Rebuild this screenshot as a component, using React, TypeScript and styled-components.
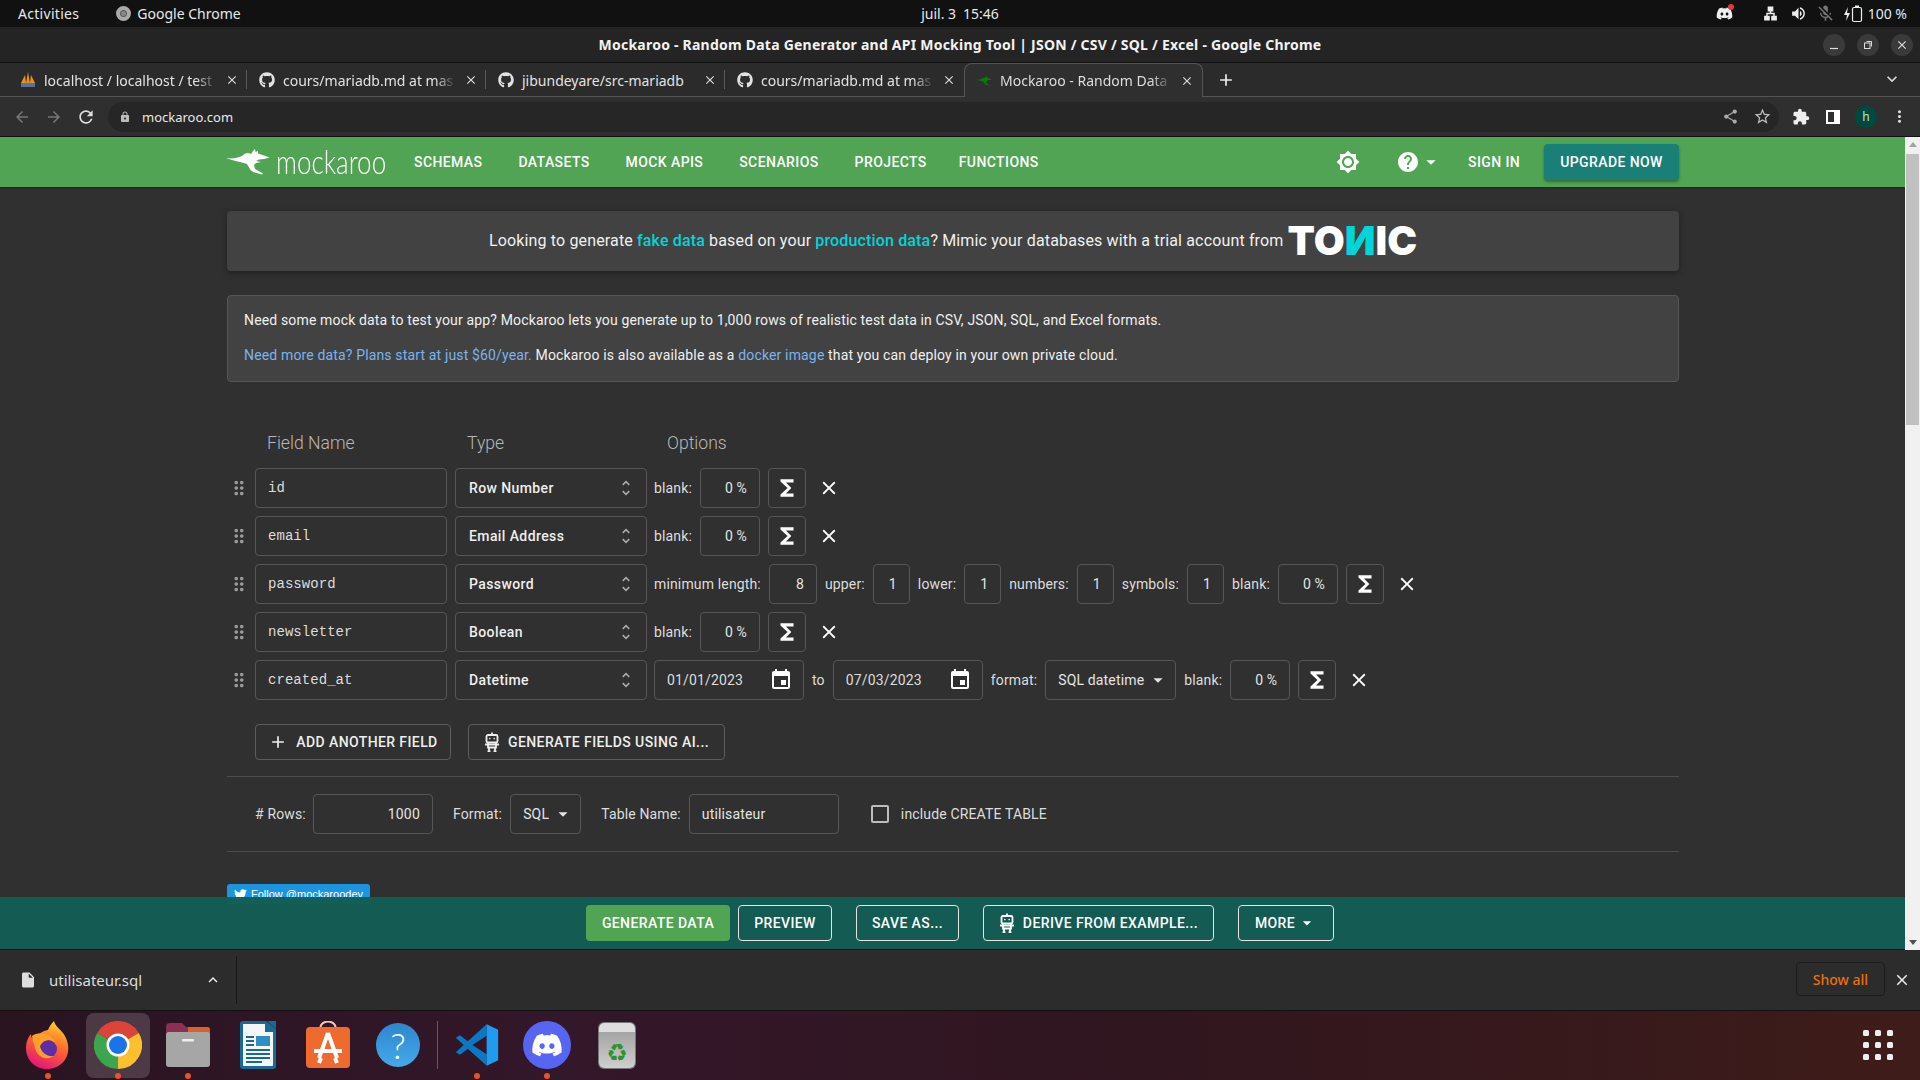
import React from "react";
import styled, { createGlobalStyle } from "styled-components";
import { FaGithub, FaDiscord, FaTwitter } from "react-icons/fa";
import {
  MdBrightness7, MdHelp, MdEvent, MdClose, MdDragIndicator, MdFunctions, MdUnfoldMore,
  MdArrowDropDown, MdAdd, MdArrowBack, MdArrowForward, MdRefresh, MdLock, MdStarBorder, MdShare,
  MdExtension, MdMoreVert, MdKeyboardArrowDown, MdKeyboardArrowUp, MdInsertDriveFile,
  MdVolumeUp, MdMicOff, MdLan,
} from "react-icons/md";

const Global = createGlobalStyle`
  html, body { margin: 0; padding: 0; width: 1920px; height: 1080px; overflow: hidden; background: #303030; }
  #root { width: 1920px; height: 1080px; }
  * { box-sizing: border-box; }
`;

const ubuntu = `"Noto Sans", "Open Sans", sans-serif`;

const Screen = styled.div`
  width: 1920px; height: 1080px; display: flex; flex-direction: column;
  font-family: Roboto, sans-serif; font-size: 14px; color: #eee; overflow: hidden;
`;

/* GNOME top bar */
const TopBar = styled.div`
  height: 27px; flex: none; background: #111; display: grid; grid-template-columns: 1fr auto 1fr;
  align-items: center; padding: 0 13px; font-family: ${ubuntu}; font-size: 14px; color: #e8e8e8;
`;
const TopLeft = styled.div`display: flex; align-items: center; padding-left: 5px;`;
const Activities = styled.span`margin-right: 37px; letter-spacing: 0.3px;`;
const AppName = styled.span`display: flex; align-items: center; gap: 6px;`;
const AppDot = styled.span`
  width: 15px; height: 15px; border-radius: 50%; background: #888; border: 4px solid #aaa;
  box-shadow: inset 0 0 0 1px #555;
`;
const Clock = styled.div`display: flex; gap: 7px; font-size: 14px;`;
const Tray = styled.div`display: flex; align-items: center; justify-content: flex-end; color: #eee;`;
const TrayIcon = styled.span<{ $ml: number; $dim?: boolean }>`
  display: inline-flex; margin-left: ${p => p.$ml}px; color: ${p => (p.$dim ? "#777" : "#eee")};
  position: relative;
`;
const RedDot = styled.span`
  position: absolute; right: -1px; top: -1px; width: 6px; height: 6px; border-radius: 50%; background: #e33;
`;
const Percent = styled.span`margin-left: 5px; font-size: 14px; color: #dfe9f5;`;

/* title bar */
const TitleBar = styled.div`
  height: 36px; flex: none; background: #242424; border-bottom: 1px solid #111;
  position: relative; display: flex; align-items: center; justify-content: center;
  font-family: ${ubuntu}; font-weight: 700; font-size: 14px; color: #f2f2f2;
`;
const TitleText = styled.span`letter-spacing: 0.23px;`;
const WinButtons = styled.div`
  position: absolute; right: 7px; top: 7px; display: flex; gap: 12px;
`;
const WinButton = styled.span`
  width: 22px; height: 22px; border-radius: 50%; background: #3a3a3a; display: flex;
  align-items: center; justify-content: center; color: #ddd;
`;

/* tabs */
const TabStrip = styled.div`
  height: 34px; flex: none; background: #2b2b2b; display: flex; align-items: stretch;
  padding-left: 8px; border-bottom: 1px solid #555; position: relative;
`;
const Tab = styled.div<{ $active?: boolean; $sep?: boolean }>`
  width: 239px; display: flex; align-items: center; gap: 8px; padding: 0 8px 0 12px;
  font-family: ${ubuntu}; font-size: 14px; color: ${p => (p.$active ? "#ddd" : "#e2e2e2")};
  position: relative; margin-bottom: -1px;
  ${p => p.$active && `
    background: #2f2f2f; border: 1px solid #555; border-bottom: none; border-radius: 8px 8px 0 0; padding-left: 11px;
  `}
  ${p => p.$sep && `
    &::after { content: ""; position: absolute; right: 0; top: 7px; bottom: 8px; width: 1px; background: #5a5a5a; }
  `}
`;
const TabIcon = styled.span`flex: none; width: 16px; height: 16px; display: flex; align-items: center; justify-content: center;`;
const TabLabel = styled.span<{ $fade?: boolean }>`
  flex: 1; white-space: nowrap;
  ${p => p.$fade && `
    -webkit-mask-image: linear-gradient(to right, #000 88%, transparent 100%);
    mask-image: linear-gradient(to right, #000 88%, transparent 100%);
  `}
`;
const TabClose = styled.span`flex: none; display: flex; color: #ddd;`;
const TabAdd = styled.span`display: flex; align-items: center; margin-left: 13px; color: #eee;`;
const TabChevron = styled.span`position: absolute; right: 18px; top: 6px; display: flex; color: #ddd;`;

/* toolbar */
const Toolbar = styled.div`
  height: 40px; flex: none; background: #2f2f2f; border-bottom: 1px solid #111; display: flex; align-items: center;
  padding-left: 6px;
`;
const NavIcon = styled.span<{ $dim?: boolean; $w?: number }>`
  width: ${p => p.$w ?? 32}px; display: flex; justify-content: center; align-items: center; flex: none;
  color: ${p => (p.$dim ? "#777" : "#ddd")};
`;
const Omnibox = styled.div`
  margin-left: 6px; width: 1671px; height: 30px; border-radius: 15px; background: #262626; display: flex;
  align-items: center; padding: 0 1px 0 11px; font-family: ${ubuntu}; font-size: 13px; color: #e8e8e8; gap: 7px; flex: none;
`;
const Url = styled.span`flex: 1; margin-left: 4px;`;
const Avatar = styled.span`
  width: 22px; height: 22px; border-radius: 50%; background: #00493f; color: #bfe5dc; display: flex;
  align-items: center; justify-content: center; font-size: 12px; font-family: ${ubuntu};
  margin: 0 6px 0 12px; flex: none;
`;
const SidePanel = styled.span`
  width: 14px; height: 14px; background: linear-gradient(to right, #2f2f2f 0 60%, #fff 60%);
  border: 2px solid #fff; display: block;
`;

/* page */
const Viewport = styled.div`flex: 1; display: flex; min-height: 0; background: #303030;`;
const Page = styled.div`flex: 1; position: relative; overflow: hidden; display: flex; flex-direction: column; letter-spacing: 0.15px;`;

const Nav = styled.nav`
  height: 50px; flex: none; background: #50a454; display: flex; align-items: center; padding: 0 0 0 226px;
  box-shadow: 0 1px 2px rgba(0,0,0,.3);
`;
const Logo = styled.div`
  width: 161px; display: flex; align-items: center; flex: none; gap: 6px; margin-right: 27px;
  svg { flex: none; }
`;
const LogoText = styled.span`
  font-family: Lato, sans-serif; font-weight: 300; font-size: 32.5px; color: #fff; line-height: 40px; width: 110px;
  transform-origin: left center; transform: scaleX(0.8); white-space: nowrap; letter-spacing: 0;
`;
const NavLinks = styled.div`display: flex; gap: 36px; flex: none;`;
const NavLink = styled.a`
  font-weight: 500; font-size: 14px; letter-spacing: 0.4px; color: #fff; text-transform: uppercase; white-space: nowrap;
  &:last-child { margin-left: -4px; }
`;
const NavRight = styled.div`
  margin-left: auto; width: 343px; margin-right: 226px; flex: none; display: flex; align-items: center; color: #fff;
`;
const HelpGroup = styled.span`display: flex; align-items: center; margin-left: 36px;`;
const SignIn = styled(NavLink)`margin-left: 26px;`;
const Upgrade = styled.button`
  margin-left: auto; height: 36px; width: 135px; border: 0; border-radius: 4px; background: #1a8077; color: #fff;
  font: 500 14px Roboto, sans-serif; letter-spacing: 0.4px; box-shadow: 0 2px 3px rgba(0,0,0,.35); text-transform: uppercase;
`;

const Content = styled.main`
  flex: 1; padding: 24px 226px 0 227px; min-height: 0;
`;
const Banner = styled.div`
  height: 60px; padding-bottom: 2px; background: #424242; border-radius: 4px; display: flex; align-items: center; justify-content: center;
  font-size: 16px; color: #f0f0f0; box-shadow: 0 2px 6px rgba(0,0,0,.35); white-space: pre;
`;
const Accent = styled.b`color: #00d5d8; font-weight: 500;`;
const Tonic = styled.span`
  font-family: Inter, sans-serif; font-weight: 900; font-size: 40px; line-height: 40px; color: #fff;
  letter-spacing: 0; display: inline-block; transform: translateY(1px);
`;
const TonicN = styled.span`color: #00d5d8;`;
const Info = styled.div`
  margin-top: 24px; height: 87px; background: #424242; border: 1px solid #565656; border-radius: 4px;
  padding: 14px 16px 0; color: #f0f0f0; line-height: 20px;
`;
const InfoLine = styled.p`margin: 0 0 15px;`;
const Link = styled.a`color: #7cb2ee;`;

const Headers = styled.div`
  display: flex; margin-top: 50px; height: 24px; padding-left: 40px; font-size: 17.6px; font-weight: 300; line-height: 22px; color: #b8b8b8;
  letter-spacing: 0;
`;
const Header = styled.span`width: 200px;`;
const Rows = styled.div`margin-top: 12px; display: flex; flex-direction: column; gap: 8px;`;
const Row = styled.div`height: 40px; display: flex; align-items: center; gap: 8px; white-space: nowrap;`;
const Handle = styled.span`width: 28px; margin-right: -8px; display: flex; justify-content: center; color: #9a9a9a; transform: translateX(-2px);`;
const Box = styled.div<{ $w: number }>`
  width: ${p => p.$w}px; height: 40px; flex: none; border: 1px solid #565656; border-radius: 4px;
  display: flex; align-items: center; padding: 0 12px; color: #e4e4e4;
`;
const NameBox = styled(Box)`
  font-family: "Liberation Mono", monospace; font-size: 14px; padding-bottom: 1px; color: #ddd; letter-spacing: 0.05px;
`;
const TypeBox = styled(Box)`
  justify-content: space-between; font-weight: 500; padding: 0 10px 0 13px; color: #eee; letter-spacing: 0.4px; margin-right: -1px;
`;
const ChevronWrap = styled.span`display: flex; color: #aaa;`;
const NumBox = styled(Box)`justify-content: flex-end;`;
const DateBox = styled(Box)`justify-content: space-between; padding-right: 10px; color: #ddd;`;
const SelectBox = styled(Box)`justify-content: space-between; padding-right: 6px; gap: 0;`;
const SigmaBtn = styled.span`
  width: 38px; height: 40px; flex: none; border: 1px solid #565656; border-radius: 4px; display: flex;
  align-items: center; justify-content: center; color: #fff;
`;
const Remove = styled.span`width: 30px; display: flex; justify-content: center; color: #fff;`;
const Label = styled.span`color: #ddd;`;

const Actions = styled.div`display: flex; gap: 17px; margin-top: 24px; padding-left: 28px;`;
const OutlineBtn = styled.button<{ $w: number }>`
  width: ${p => p.$w}px; height: 36px; background: transparent; border: 1px solid #5c5c5c; border-radius: 4px; color: #eee;
  font: 500 14px Roboto, sans-serif; letter-spacing: 0.4px; text-transform: uppercase; display: flex; align-items: center;
  justify-content: center; gap: 8px; padding: 0; white-space: nowrap;
`;
const Rule = styled.hr`border: 0; border-top: 1px solid #4c4c4c; margin: 0;`;
const FirstRule = styled(Rule)`margin-top: 16px;`;
const Settings = styled.div`
  height: 40px; margin: 17px 0 17px; padding-left: 28px; display: flex; align-items: center; white-space: nowrap;
`;
const SetLabel = styled(Label)<{ $ml: number; $mr: number }>`
  margin-left: ${p => p.$ml}px; margin-right: ${p => p.$mr}px;
`;
const Check = styled.span`
  width: 18px; height: 18px; border: 2px solid #bdbdbd; border-radius: 2px; margin: 0 12px 0 32px; flex: none;
`;
const Twitter = styled.a`
  margin-top: 32px; width: 143px; height: 20px; background: #1b95e0; border-radius: 3px; color: #fff; display: flex;
  align-items: center; gap: 4px; padding: 0 7px; font: 500 11px "Liberation Sans", sans-serif; white-space: nowrap;
  letter-spacing: 0;
`;

const BottomBar = styled.div`
  position: absolute; left: 0; right: 0; bottom: 0; height: 53px; background: rgba(19, 93, 85, 0.97);
  border-bottom: 1px solid #111; display: flex; align-items: center; padding-left: 586px; padding-bottom: 1px;
`;
const BarBtn = styled.button<{ $w: number; $ml: number; $fill?: boolean }>`
  width: ${p => p.$w}px; height: 36px; margin-left: ${p => p.$ml}px; flex: none; border-radius: 4px;
  background: ${p => (p.$fill ? "#50a454" : "transparent")}; border: ${p => (p.$fill ? "0" : "1px solid #e4e4e4")};
  color: #fff; font: 500 14px Roboto, sans-serif; letter-spacing: 0.4px; text-transform: uppercase;
  display: flex; align-items: center; justify-content: center; gap: 8px; padding: 0; white-space: nowrap;
`;

const Scrollbar = styled.div`
  width: 15px; flex: none; background: #f1f1f1; display: flex; flex-direction: column; align-items: center; position: relative;
`;
const Arrow = styled.span<{ $down?: boolean }>`
  width: 0; height: 0; border-left: 4px solid transparent; border-right: 4px solid transparent;
  ${p => (p.$down ? "border-top: 5px solid #505050;" : "border-bottom: 5px solid #a3a3a3;")}
  margin: 5px 0;
`;
const Thumb = styled.span`width: 13px; height: 271px; background: #c1c1c1; margin-top: 2px;`;
const Spacer = styled.span`flex: 1;`;

/* downloads */
const Downloads = styled.div`
  height: 61px; flex: none; background: #2c2c2c; border-bottom: 1px solid #111; display: flex; align-items: center;
  font-family: ${ubuntu}; color: #ddd; padding-left: 19px; position: relative;
`;
const FileName = styled.span`font-size: 15px; margin-left: 12px; width: 155px;`;
const DownloadSep = styled.span`width: 1px; height: 48px; background: #181818; margin-left: 14px;`;
const ShowAll = styled.button`
  margin-left: auto; margin-bottom: 2px; width: 89px; height: 34px; background: transparent; border: 1px solid #1c1c1c; border-radius: 4px;
  color: #e8710a; font: 500 14px ${ubuntu};
`;
const DownloadClose = styled.span`display: flex; margin: 0 9px 0 8px; color: #eee;`;

/* dock */
const Dock = styled.div`
  height: 69px; flex: none; display: flex; align-items: center; padding: 0 0 1px 13px; position: relative;
  background: linear-gradient(90deg, #2a1420 0%, #33172a 30%, #30161f 60%, #3e1c19 100%);
`;
const DockItem = styled.div<{ $active?: boolean; $running?: boolean }>`
  width: 70px; height: 68px; display: flex; align-items: center; justify-content: center; position: relative; flex: none;
  ${p => p.$active && `
    &::before { content: ""; position: absolute; left: 3px; right: 3px; top: 2px; bottom: 1px; border-radius: 8px; background: rgba(255,255,255,.16); }
  `}
  ${p => p.$running && `
    &::after { content: ""; position: absolute; left: 50%; margin-left: -3px; bottom: 0; width: 6px; height: 6px; border-radius: 50%; background: #e95420; }
  `}
  svg { position: relative; }
`;
const DockSep = styled.span`width: 1px; height: 48px; background: #6b5560; margin: 0 4px 0 4px; flex: none;`;
const DiscordDisc = styled.span`
  width: 48px; height: 48px; border-radius: 50%; background: #5865f2; color: #fff; display: flex; align-items: center; justify-content: center;
`;
const HelpDisc = styled.span`
  width: 44px; height: 44px; border-radius: 50%; background: linear-gradient(#2d86cf, #46a9e8); color: #fff;
  font: 300 36px Lato, sans-serif; display: flex; align-items: center; justify-content: center;
`;
const Bin = styled.span`
  width: 36px; height: 45px; border-radius: 5px; background: linear-gradient(#a4a4a4, #cfcfcf); display: flex;
  align-items: flex-end; justify-content: center; font: 700 24px "DejaVu Sans", sans-serif; color: #2f9130;
  border-top: 9px solid #dedede; box-shadow: 0 0 0 1px #777; line-height: 30px;
`;
const DockGrid = styled.div`
  position: absolute; right: 27px; top: 19px; display: grid; grid-template-columns: repeat(3, 6px); gap: 6px;
`;
const GridDot = styled.span`width: 6px; height: 6px; border-radius: 1.5px; background: #eee;`;

const Roo = ({ w = 44, h = 26, c = "#fff" }: { w?: number; h?: number; c?: string }) => (
  <svg width={w} height={h} viewBox="0 0 44 26" fill={c}>
    <path d="M0 9 C6 10 11 9 16 7 C19 4 22 3 25 5 L27 2 L29 0 L29.5 3 L32 2 L32 4.5 C36 6 40 7 43.5 8.5 L38 10 L33 10.5 L30 12 L35 13 L30 14 L28 16 L29 20 L37 24.5 L36 25.5 L27 23 L24.5 21 L21 15 C16 13 8 12 0 9 Z" />
  </svg>
);

const Robot = ({ c = "#eee" }: { c?: string }) => (
  <svg width="16" height="20" viewBox="0 0 16 20" fill="none" stroke={c} strokeWidth="1.8">
    <path d="M8 0.5V3" />
    <rect x="2.5" y="3" width="11" height="7.5" rx="1.5" />
    <path d="M1 12.5H15M4 11V15.5H12V11M5 15.5V19.5M11 15.5V19.5M3.5 19.5H6.5M9.5 19.5H12.5" />
    <circle cx="5.8" cy="6.6" r="0.8" fill={c} stroke="none" />
    <circle cx="10.2" cy="6.6" r="0.8" fill={c} stroke="none" />
  </svg>
);

const BatteryIcon = () => (
  <svg width="20" height="18" viewBox="0 0 20 18" fill="none">
    <path d="M5 2 L1 10 H4 L3 16 L7 8 H4 Z" fill="#eee" />
    <rect x="9.5" y="2.5" width="9" height="14" rx="1.5" stroke="#eee" strokeWidth="1.2" />
    <rect x="12" y="0.5" width="4" height="2" fill="#eee" />
  </svg>
);

const Pma = () => (
  <svg width="16" height="16" viewBox="0 0 16 16">
    <path d="M1 11 L5 3 L6 11Z M6 11 L8 0 L10 11Z M10 11 L11 3 L15 11Z" fill="#e8931c" />
    <rect x="1" y="11" width="14" height="4" fill="#5f6fa5" />
  </svg>
);

const Firefox = () => (
  <svg width="44" height="48" viewBox="0 0 44 48">
    <defs>
      <linearGradient id="ff" x1="0.7" y1="0" x2="0.3" y2="1">
        <stop offset="0" stopColor="#ffd02e" />
        <stop offset="0.45" stopColor="#ff6a2b" />
        <stop offset="1" stopColor="#e3127a" />
      </linearGradient>
    </defs>
    <path d="M28 0 C30 8 40 10 42 24 C44 38 34 48 21 48 C8 48 0 38 0 27 C0 20 3 15 5 13 C5 17 7 19 9 20 C10 14 16 10 22 9 C23 6 25 3 28 0 Z" fill="url(#ff)" />
    <circle cx="22" cy="28" r="9" fill="#5b2ea6" />
    <path d="M6 15 C12 10 26 12 29 21 C23 17 17 19 14 25 C15 31 20 36 28 35 C20 40 11 36 9 27 C8 22 6 19 6 15Z" fill="#ffa02b" />
  </svg>
);

const Chrome = () => (
  <svg width="48" height="48" viewBox="0 0 48 48">
    <path d="M24 24 L3.2 12 A24 24 0 0 1 44.8 12 Z" fill="#db4437" />
    <path d="M24 24 L44.8 12 A24 24 0 0 1 24 48 Z" fill="#fbc02d" />
    <path d="M24 24 L24 48 A24 24 0 0 1 3.2 12 Z" fill="#3ea54f" />
    <circle cx="24" cy="24" r="11.5" fill="#fff" />
    <circle cx="24" cy="24" r="9" fill="#1a73e8" />
  </svg>
);

const Files = () => (
  <svg width="44" height="44" viewBox="0 0 44 44">
    <path d="M0 4 Q0 0 4 0 H16 L20 4 H41 Q44 4 44 7 V14 H0 Z" fill="#8c2f55" />
    <path d="M22 4 H41 Q44 4 44 7 V14 H22 Z" fill="#d9622c" />
    <rect x="0" y="9" width="44" height="35" rx="3" fill="#a6a6a6" />
    <rect x="16" y="16" width="12" height="2.5" rx="1" fill="#eee" />
  </svg>
);

const Writer = () => (
  <svg width="36" height="48" viewBox="0 0 36 48">
    <path d="M3 0 H26 L36 8 V45 Q36 48 33 48 H3 Q0 48 0 45 V3 Q0 0 3 0Z" fill="#1b6a96" />
    <path d="M3 3 H25 V11 H33 V44 Q33 45 32 45 H4 Q3 45 3 44Z" fill="#f4f6f8" />
    <path d="M27 0 L36 0 V8Z" fill="#1b6a96" />
    <rect x="16" y="15" width="14" height="10" fill="#2f8ec4" />
    <path d="M6 16H14M6 20H14M6 24H14M6 29H30M6 33H30M6 37H30M6 41H22" stroke="#1b6a96" strokeWidth="2" />
  </svg>
);

const AppStore = () => (
  <svg width="44" height="48" viewBox="0 0 44 48">
    <path d="M14 8 C14 -2 30 -2 30 8" fill="none" stroke="#f3c9a9" strokeWidth="2" />
    <rect x="0" y="6" width="44" height="41" rx="4" fill="#ee6a2e" />
    <path d="M22 12 L13 37 M22 12 L31 37 M8 30 H36 M15 37 L13 42 M29 37 L31 42" stroke="#fff" strokeWidth="4" fill="none" />
  </svg>
);

const VsCode = () => (
  <svg width="46" height="46" viewBox="0 0 100 100">
    <path d="M71 5 L30 42 L13 29 L4 34 L21 50 L4 66 L13 71 L30 58 L71 95 L71 70 L40 50 L71 30 Z" fill="#0a78c2" />
    <path d="M71 5 L96 17 V83 L71 95 Z" fill="#1f9cf0" />
  </svg>
);

const Tri = () => <MdArrowDropDown size={22} />;

const Chevrons = () => (
  <ChevronWrap>
    <MdUnfoldMore size={20} />
  </ChevronWrap>
);

const Blank = () => <Label>blank:</Label>;

const Tail = () => (
  <>
    <SigmaBtn>
      <MdFunctions size={26} />
    </SigmaBtn>
    <Remove>
      <MdClose size={22} />
    </Remove>
  </>
);

const FieldRow = ({ name, type, children }: { name: string; type: string; children: React.ReactNode }) => (
  <Row>
    <Handle>
      <MdDragIndicator size={22} />
    </Handle>
    <NameBox $w={192}>{name}</NameBox>
    <TypeBox $w={192}>
      {type}
      <Chevrons />
    </TypeBox>
    {children}
  </Row>
);

const tabs = [
  { id: 1, label: "localhost / localhost / test", icon: <Pma />, sep: true, fade: true },
  { id: 2, label: "cours/mariadb.md at mas", icon: <FaGithub size={16} />, sep: true, fade: true },
  { id: 3, label: "jibundeyare/src-mariadb", icon: <FaGithub size={16} />, sep: true, fade: false },
  { id: 4, label: "cours/mariadb.md at mas", icon: <FaGithub size={16} />, sep: false, fade: true },
];

export default function App() {
  return (
    <Screen>
      <Global />
      <TopBar>
        <TopLeft>
          <Activities>Activities</Activities>
          <AppName>
            <AppDot />
            Google Chrome
          </AppName>
        </TopLeft>
        <Clock>
          <span>juil. 3</span>
          <span>15:46</span>
        </Clock>
        <Tray>
          <TrayIcon $ml={0}>
            <FaDiscord size={17} />
            <RedDot />
          </TrayIcon>
          <TrayIcon $ml={29}>
            <MdLan size={17} />
          </TrayIcon>
          <TrayIcon $ml={11}>
            <MdVolumeUp size={17} />
          </TrayIcon>
          <TrayIcon $ml={9} $dim>
            <MdMicOff size={19} />
          </TrayIcon>
          <TrayIcon $ml={8}>
            <BatteryIcon />
          </TrayIcon>
          <Percent>100 %</Percent>
        </Tray>
      </TopBar>
      <TitleBar>
        <TitleText>Mockaroo - Random Data Generator and API Mocking Tool | JSON / CSV / SQL / Excel - Google Chrome</TitleText>
        <WinButtons>
          <WinButton>
            <svg width="10" height="10" viewBox="0 0 10 10">
              <path d="M1 8.5H9" stroke="#ddd" strokeWidth="1.2" />
            </svg>
          </WinButton>
          <WinButton>
            <svg width="10" height="10" viewBox="0 0 10 10" fill="none" stroke="#ddd">
              <rect x="1.5" y="3" width="5.5" height="5.5" />
              <path d="M3.5 1.5H8.5V6.5" />
            </svg>
          </WinButton>
          <WinButton>
            <MdClose size={14} />
          </WinButton>
        </WinButtons>
      </TitleBar>
      <TabStrip>
        {tabs.map(t => (
          <Tab key={t.id} $sep={t.sep}>
            <TabIcon>{t.icon}</TabIcon>
            <TabLabel $fade={t.fade}>{t.label}</TabLabel>
            <TabClose>
              <MdClose size={14} />
            </TabClose>
          </Tab>
        ))}
        <Tab $active>
          <TabIcon>
            <Roo w={16} h={10} c="#0a7a0a" />
          </TabIcon>
          <TabLabel $fade>Mockaroo - Random Data</TabLabel>
          <TabClose>
            <MdClose size={14} />
          </TabClose>
        </Tab>
        <TabAdd>
          <MdAdd size={20} />
        </TabAdd>
        <TabChevron>
          <MdKeyboardArrowDown size={20} />
        </TabChevron>
      </TabStrip>
      <Toolbar>
        <NavIcon $dim>
          <MdArrowBack size={18} />
        </NavIcon>
        <NavIcon $dim>
          <MdArrowForward size={18} />
        </NavIcon>
        <NavIcon>
          <MdRefresh size={20} />
        </NavIcon>
        <Omnibox>
          <MdLock size={12} color="#bbb" />
          <Url>mockaroo.com</Url>
          <NavIcon $w={18}>
            <MdShare size={17} color="#aaa" />
          </NavIcon>
          <NavIcon $w={32}>
            <MdStarBorder size={19} color="#bbb" />
          </NavIcon>
        </Omnibox>
        <NavIcon $w={44}>
          <MdExtension size={18} color="#eee" />
        </NavIcon>
        <NavIcon $w={20}>
          <SidePanel />
        </NavIcon>
        <Avatar>h</Avatar>
        <NavIcon>
          <MdMoreVert size={19} />
        </NavIcon>
      </Toolbar>
      <Viewport>
        <Page>
          <Nav>
            <Logo>
              <Roo />
              <LogoText>mockaroo</LogoText>
            </Logo>
            <NavLinks>
              {["Schemas", "Datasets", "Mock APIs", "Scenarios", "Projects", "Functions"].map(n => (
                <NavLink key={n}>{n}</NavLink>
              ))}
            </NavLinks>
            <NavRight>
              <MdBrightness7 size={24} />
              <HelpGroup>
                <MdHelp size={24} />
                <Tri />
              </HelpGroup>
              <SignIn>Sign in</SignIn>
              <Upgrade>Upgrade now</Upgrade>
            </NavRight>
          </Nav>
          <Content>
            <Banner>
              Looking to generate <Accent>fake data</Accent> based on your <Accent>production data</Accent>? Mimic your databases with a trial account from{" "}
              <Tonic>
                TO<TonicN>И</TonicN>IC
              </Tonic>
            </Banner>
            <Info>
              <InfoLine>
                Need some mock data to test your app? Mockaroo lets you generate up to 1,000 rows of realistic test data in CSV, JSON, SQL, and Excel formats.
              </InfoLine>
              <InfoLine>
                <Link>Need more data? Plans start at just $60/year.</Link> Mockaroo is also available as a <Link>docker image</Link> that you can deploy in your own private cloud.
              </InfoLine>
            </Info>
            <Headers>
              <Header>Field Name</Header>
              <Header>Type</Header>
              <Header>Options</Header>
            </Headers>
            <Rows>
              <FieldRow name="id" type="Row Number">
                <Blank />
                <NumBox $w={60}>0 %</NumBox>
                <Tail />
              </FieldRow>
              <FieldRow name="email" type="Email Address">
                <Blank />
                <NumBox $w={60}>0 %</NumBox>
                <Tail />
              </FieldRow>
              <FieldRow name="password" type="Password">
                <Label>minimum length:</Label>
                <NumBox $w={48}>8</NumBox>
                <Label>upper:</Label>
                <NumBox $w={37}>1</NumBox>
                <Label>lower:</Label>
                <NumBox $w={37}>1</NumBox>
                <Label>numbers:</Label>
                <NumBox $w={37}>1</NumBox>
                <Label>symbols:</Label>
                <NumBox $w={37}>1</NumBox>
                <Blank />
                <NumBox $w={60}>0 %</NumBox>
                <Tail />
              </FieldRow>
              <FieldRow name="newsletter" type="Boolean">
                <Blank />
                <NumBox $w={60}>0 %</NumBox>
                <Tail />
              </FieldRow>
              <FieldRow name="created_at" type="Datetime">
                <DateBox $w={150}>
                  01/01/2023
                  <MdEvent size={24} color="#fff" />
                </DateBox>
                <Label>to</Label>
                <DateBox $w={150}>
                  07/03/2023
                  <MdEvent size={24} color="#fff" />
                </DateBox>
                <Label>format:</Label>
                <SelectBox $w={131}>
                  SQL datetime
                  <Tri />
                </SelectBox>
                <Blank />
                <NumBox $w={60}>0 %</NumBox>
                <Tail />
              </FieldRow>
            </Rows>
            <Actions>
              <OutlineBtn $w={196}>
                <MdAdd size={20} />
                Add another field
              </OutlineBtn>
              <OutlineBtn $w={257}>
                <Robot />
                Generate fields using AI...
              </OutlineBtn>
            </Actions>
            <FirstRule />
            <Settings>
              <SetLabel $ml={0} $mr={7}># Rows:</SetLabel>
              <NumBox $w={120}>1000</NumBox>
              <SetLabel $ml={20} $mr={8}>Format:</SetLabel>
              <SelectBox $w={71}>
                SQL
                <Tri />
              </SelectBox>
              <SetLabel $ml={20} $mr={8}>Table Name:</SetLabel>
              <Box $w={150}>utilisateur</Box>
              <Check />
              <Label>include CREATE TABLE</Label>
            </Settings>
            <Rule />
            <Twitter>
              <FaTwitter size={13} />
              Follow @mockaroodev
            </Twitter>
          </Content>
          <BottomBar>
            <BarBtn $w={144} $ml={0} $fill>Generate data</BarBtn>
            <BarBtn $w={94} $ml={8}>Preview</BarBtn>
            <BarBtn $w={103} $ml={24}>Save as...</BarBtn>
            <BarBtn $w={231} $ml={24}>
              <Robot c="#fff" />
              Derive from example...
            </BarBtn>
            <BarBtn $w={96} $ml={24}>
              More
              <MdArrowDropDown size={20} style={{ marginLeft: -6 }} />
            </BarBtn>
          </BottomBar>
        </Page>
        <Scrollbar>
          <Arrow />
          <Thumb />
          <Spacer />
          <Arrow $down />
        </Scrollbar>
      </Viewport>
      <Downloads>
        <MdInsertDriveFile size={18} color="#ddd" />
        <FileName>utilisateur.sql</FileName>
        <MdKeyboardArrowUp size={18} color="#eee" />
        <DownloadSep />
        <ShowAll>Show all</ShowAll>
        <DownloadClose>
          <MdClose size={18} />
        </DownloadClose>
      </Downloads>
      <Dock>
        <DockItem $running>
          <Firefox />
        </DockItem>
        <DockItem $active $running>
          <Chrome />
        </DockItem>
        <DockItem $running>
          <Files />
        </DockItem>
        <DockItem>
          <Writer />
        </DockItem>
        <DockItem>
          <AppStore />
        </DockItem>
        <DockItem>
          <HelpDisc>?</HelpDisc>
        </DockItem>
        <DockSep />
        <DockItem $running>
          <VsCode />
        </DockItem>
        <DockItem $running>
          <DiscordDisc>
            <FaDiscord size={32} />
          </DiscordDisc>
        </DockItem>
        <DockItem>
          <Bin>♻</Bin>
        </DockItem>
        <DockGrid>
          {Array.from({ length: 9 }, (_, i) => (
            <GridDot key={i} />
          ))}
        </DockGrid>
      </Dock>
    </Screen>
  );
}
